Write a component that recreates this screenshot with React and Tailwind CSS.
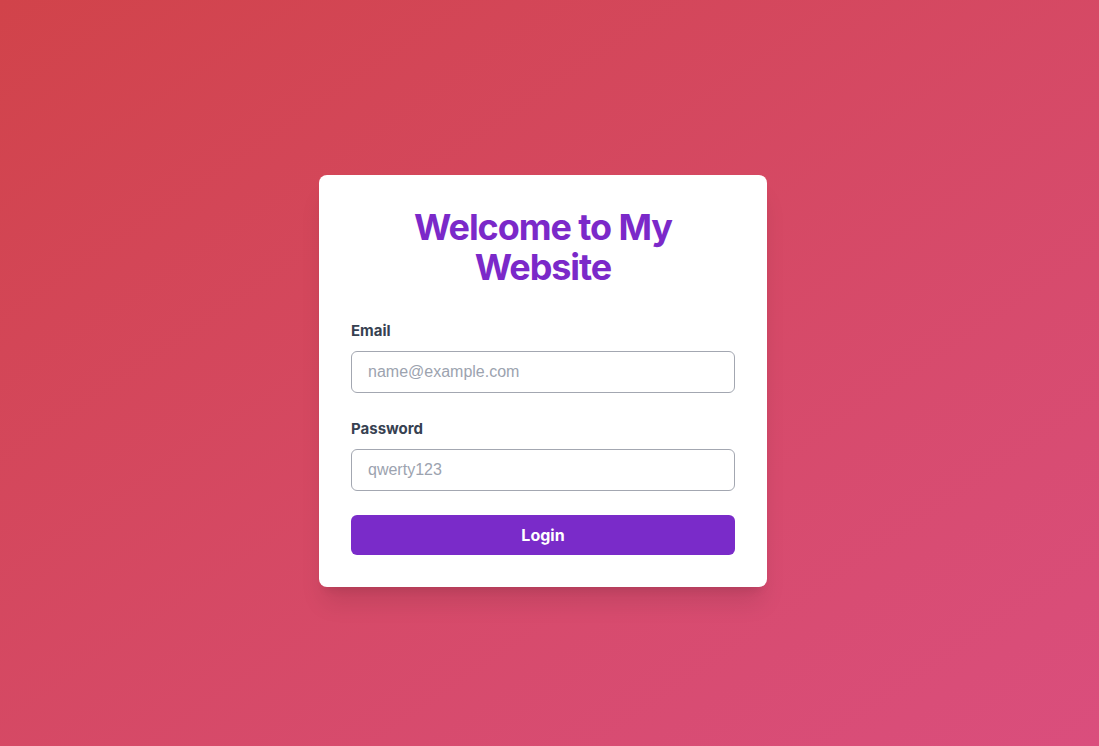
export default function App() {
  return (
    <div className="flex min-h-screen items-center justify-center bg-linear-to-br from-[#d1434a] to-[#da4e7d] pt-4 pr-[13px] font-['Inter',sans-serif]">
      <div className="w-[448px] rounded-lg bg-white p-8 shadow-xl">
        {/* Heading */}
        <h1 className="mb-8 text-center text-4xl font-bold tracking-[-0.03em] text-[#7b29c9]">Welcome to My Website</h1>

        <form onSubmit={(e) => e.preventDefault()}>
          <div className="mb-6">
            <label className="mb-2 block text-[15px] leading-6 font-bold text-[#374151]">Email</label>
            <input
              type="email"
              placeholder="name@example.com"
              className="w-full rounded-md border border-[#a3a7b1] px-4 py-2 text-base leading-6 font-['Liberation_Sans',sans-serif] placeholder:text-[#9ca3af] focus:outline-none"
            />
          </div>

          <div className="mb-6">
            <label className="mb-2 block text-[15px] leading-6 font-bold text-[#374151]">Password</label>
            <input
              type="password"
              placeholder="qwerty123"
              className="w-full rounded-md border border-[#a3a7b1] px-4 py-2 text-base leading-6 font-['Liberation_Sans',sans-serif] placeholder:text-[#9ca3af] focus:outline-none"
            />
          </div>

          <button className="w-full rounded-md bg-[#7a2bc9] py-2 text-base leading-6 font-bold text-white">
            Login
          </button>
        </form>
      </div>
    </div>
  )
}
